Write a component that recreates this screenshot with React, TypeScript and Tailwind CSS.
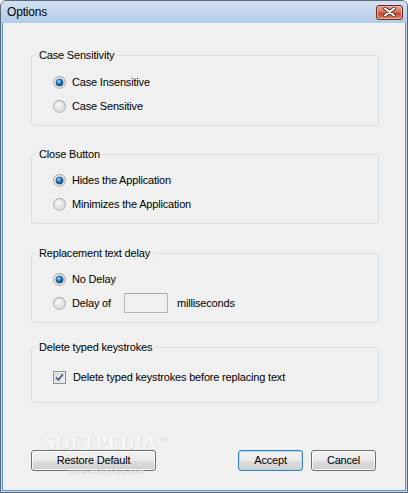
import React from "react";

const font = { fontFamily: '"Liberation Sans", Arial, sans-serif', letterSpacing: "-0.18px" };

function Radio({ checked }: { checked?: boolean }) {
  return (
    <svg width="13" height="13" viewBox="0 0 13 13" className="shrink-0">
      <defs>
        <radialGradient id="rg-bg" cx="0.4" cy="0.35" r="0.7">
          <stop offset="0" stopColor="#fbfbfb" />
          <stop offset="1" stopColor="#cfd0d1" />
        </radialGradient>
        <linearGradient id="rg-ring" x1="0" y1="0" x2="0" y2="1">
          <stop offset="0" stopColor="#9a9a9a" />
          <stop offset="1" stopColor="#b9b9b9" />
        </linearGradient>
        <radialGradient id="rg-dot" cx="0.4" cy="0.35" r="0.65">
          <stop offset="0" stopColor="#9ce0fb" />
          <stop offset="0.45" stopColor="#2a8ad0" />
          <stop offset="1" stopColor="#0d3f73" />
        </radialGradient>
      </defs>
      <circle cx="6.5" cy="6.5" r="6" fill="url(#rg-bg)" stroke="url(#rg-ring)" strokeWidth="1" />
      <circle cx="6.5" cy="6.5" r="4.6" fill="none" stroke="#e6e6e6" strokeWidth="0.8" />
      {checked && <circle cx="6.5" cy="6.5" r="3.6" fill="url(#rg-dot)" stroke="#163f66" strokeWidth="0.6" />}
    </svg>
  );
}

function Checkbox() {
  return (
    <svg width="13" height="13" viewBox="0 0 13 13" className="shrink-0">
      <defs>
        <linearGradient id="cb-bg" x1="0" y1="0" x2="1" y2="1">
          <stop offset="0" stopColor="#d9dadb" />
          <stop offset="1" stopColor="#f6f6f6" />
        </linearGradient>
      </defs>
      <rect x="0.5" y="0.5" width="12" height="12" fill="#fdfdfd" stroke="#8f8f8f" />
      <rect x="2" y="2" width="9" height="9" fill="url(#cb-bg)" stroke="#c9cacc" strokeWidth="0.6" />
      <path d="M3.2 6.4 L5.4 9 L9.8 3.3" fill="none" stroke="#4a5d8c" strokeWidth="1.8" strokeLinejoin="round" />
    </svg>
  );
}

function Group({
  title,
  className,
  children,
}: {
  title: string;
  className: string;
  children: React.ReactNode;
}) {
  return (
    <div className={`relative border border-[#d5dfe5] rounded-[3px] pl-[21px] ${className}`}>
      <span className="absolute top-[-8px] left-[4px] px-[3px] bg-[#f0f0f0] leading-[14px] text-[11px] text-black">
        {title}
      </span>
      {children}
    </div>
  );
}

function Row({ children }: { children: React.ReactNode }) {
  return <div className="h-[24px] flex items-center gap-[6px] text-[11px] text-black">{children}</div>;
}

function Button({ label, w, primary }: { label: string; w: string; primary?: boolean }) {
  return (
    <div
      className={`${w} h-[21px] rounded-[3px] border flex items-center justify-center text-[11px] text-black bg-[linear-gradient(#f2f2f2_0%,#ebebeb_50%,#dddddd_50%,#cfcfcf_100%)] ${
        primary
          ? "border-[#3c7fb1] shadow-[inset_0_0_0_1px_#a9dcf6]"
          : "border-[#707070] shadow-[inset_0_0_0_1px_#fbfbfb]"
      }`}
    >
      {label}
    </div>
  );
}

export default function App() {
  return (
    <div style={font} className="w-[408px] h-[493px] flex flex-col bg-[#c3d6ec] border border-[#5a6878] rounded-t-[6px] overflow-hidden">
      <div className="h-[22px] shrink-0 flex items-center justify-between pl-[6px] pr-[4px] bg-[linear-gradient(#d2e2f3,#b3cbe6)]">
        <span className="text-[12px] text-black leading-none">Options</span>
        <div className="w-[27px] h-[15px] rounded-[3px] border border-[#6b2a1f] flex items-center justify-center bg-[linear-gradient(#e7a490_0%,#d57560_45%,#c2472f_55%,#d7846b_100%)] shadow-[inset_0_0_0_1px_#eab2a2]">
          <svg width="13" height="10" viewBox="0 0 13 10">
            <path d="M2 1.5 L11 8.5 M11 1.5 L2 8.5" stroke="#5a2a22" strokeWidth="3.6" strokeLinecap="round" />
            <path d="M2 1.5 L11 8.5 M11 1.5 L2 8.5" stroke="#ffffff" strokeWidth="2" strokeLinecap="round" />
          </svg>
        </div>
      </div>
      <div className="relative flex-1 mx-[1px] mb-[1px] border border-t-0 border-[#5c9ad6] bg-[#f0f0f0] flex flex-col pt-[32px] pl-[28px] pr-[26px]">
        <Group title="Case Sensitivity" className="h-[71px] pt-[14px]">
          <Row>
            <Radio checked />
            <span>Case Insensitive</span>
          </Row>
          <Row>
            <Radio />
            <span>Case Sensitive</span>
          </Row>
        </Group>
        <Group title="Close Button" className="mt-[28px] h-[70px] pt-[13px]">
          <Row>
            <Radio checked />
            <span>Hides the Application</span>
          </Row>
          <Row>
            <Radio />
            <span>Minimizes the Application</span>
          </Row>
        </Group>
        <Group title="Replacement text delay" className="mt-[29px] h-[70px] pt-[13px]">
          <Row>
            <Radio checked />
            <span>No Delay</span>
          </Row>
          <Row>
            <Radio />
            <span className="w-[46px]">Delay of</span>
            <div className="w-[44px] h-[20px] border border-[#b3b6bb] border-t-[#a5a8ad] rounded-[1px] bg-[#f0f0f0]" />
            <span className="ml-[3px]">milliseconds</span>
          </Row>
        </Group>
        <Group title="Delete typed keystrokes" className="mt-[24px] h-[56px] pt-[17px]">
          <div className="h-[24px] flex items-center gap-[7px] text-[11px] text-black">
            <Checkbox />
            <span>Delete typed keystrokes before replacing text</span>
          </div>
        </Group>
        <div className="mt-[47px] flex items-center pr-[3px]">
          <Button label="Restore Default" w="w-[125px]" />
          <div className="flex-1" />
          <div className="flex gap-[8px]">
            <Button label="Accept" w="w-[65px]" primary />
            <Button label="Cancel" w="w-[65px]" />
          </div>
        </div>
        <div className="pointer-events-none absolute left-[42px] top-[414px] flex items-start">
          <span
            className="text-[18px] leading-[13px] font-bold tracking-[1px] text-[#f8f8f8]"
            style={{ fontFamily: '"Liberation Serif", serif', textShadow: "1px 1px 0 #dedede" }}
          >
            SOFTPEDIA
          </span>
          <span className="text-[6px] leading-[6px] text-[#dadada] ml-[2px]">TM</span>
        </div>
        <div className="pointer-events-none absolute left-[66px] top-[445px] text-[8px] leading-[8px] text-[#d6d6d6] tracking-[0.4px]">
          www.softpedia.com
        </div>
      </div>
    </div>
  );
}
